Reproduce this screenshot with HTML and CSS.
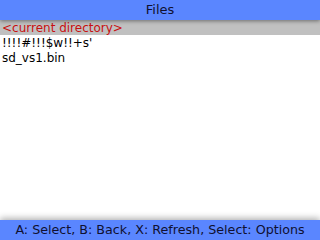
FILE: index.html
```html
<!DOCTYPE html>
<html>
<head>
<meta charset="utf-8">
<link rel="stylesheet" href="styles.css">
</head>
<body>
<div class="screen">
  <header class="titlebar">Files</header>
  <main class="list">
    <div class="row selected">&lt;current directory&gt;</div>
    <div class="row">!!!!#!!!$w!!+s'</div>
    <div class="row">sd_vs1.bin</div>
  </main>
  <footer class="statusbar">A: Select, B: Back, X: Refresh, Select: Options</footer>
</div>
</body>
</html>
```
FILE: styles.css
```css
html, body {
  margin: 0;
  padding: 0;
  background: #ffffff;
}
.screen {
  width: 320px;
  height: 240px;
  display: flex;
  flex-direction: column;
  font-family: "DejaVu Sans", sans-serif;
  font-size: 12px;
  overflow: hidden;
}
.titlebar {
  height: 20px;
  line-height: 20px;
  background: #5a86ff;
  color: #101030;
  text-align: center;
  font-size: 13px;
  position: relative;
  z-index: 2;
  box-shadow: 0 1px 4px rgba(0,0,0,0.45);
  flex: none;
}
.list {
  flex: 1;
  display: flex;
  flex-direction: column;
}
.row {
  height: 15px;
  line-height: 16px;
  padding-left: 2px;
  color: #000000;
  white-space: nowrap;
}
.row.selected {
  background: #c0c0c0;
  color: #c81010;
}
.statusbar {
  height: 20px;
  line-height: 20px;
  background: #5a86ff;
  color: #101030;
  text-align: center;
  font-size: 12.7px;
  flex: none;
  position: relative;
  box-shadow: 0 -2px 6px rgba(0,0,0,0.3);
  white-space: nowrap;
}
```
